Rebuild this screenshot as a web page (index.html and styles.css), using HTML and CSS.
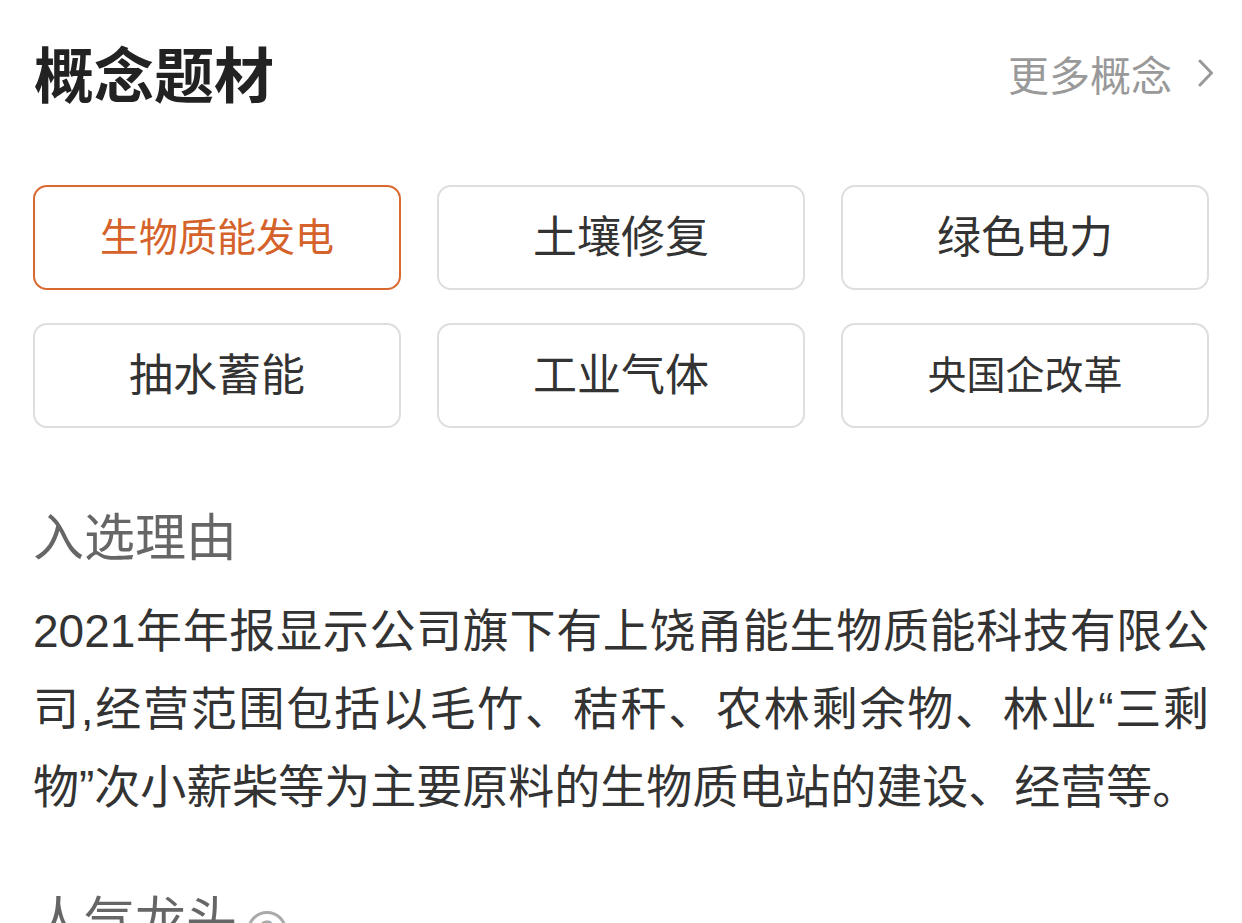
FILE: index.html
```html
<!DOCTYPE html>
<html lang="zh-CN">
<head>
<meta charset="utf-8">
<title>概念题材</title>
<link rel="stylesheet" href="styles.css">
</head>
<body>
<div class="page">
  <div class="header">
    <h1 class="title">概念题材</h1>
    <a class="more">更多概念<svg class="chev" width="16" height="28" viewBox="0 0 16 28"><polyline points="2,2 13.5,14 2,26" fill="none" stroke="#999" stroke-width="3" stroke-linecap="round" stroke-linejoin="round"/></svg></a>
  </div>

  <div class="tags">
    <div class="tag active small">生物质能发电</div>
    <div class="tag">土壤修复</div>
    <div class="tag">绿色电力</div>
    <div class="tag">抽水蓄能</div>
    <div class="tag">工业气体</div>
    <div class="tag small">央国企改革</div>
  </div>

  <h2 class="section">入选理由</h2>
  <p class="reason">2021年年报显示公司旗下有上饶甬能生物质能科技有限公司,经营范围包括以毛竹、秸秆、农林剩余物、林业“三剩物”次小薪柴等为主要原料的生物质电站的建设、经营等。</p>

  <h2 class="section section-2">人气龙头<span class="help">?</span></h2>
</div>
</body>
</html>
```
FILE: styles.css
```css
html, body {
  margin: 0;
  padding: 0;
  background: #ffffff;
}

body {
  font-family: "Liberation Sans", "Noto Sans CJK SC", sans-serif;
  color: #333333;
  overflow: hidden;
}

.page {
  padding: 0 33px;
}

.header {
  display: flex;
  justify-content: space-between;
  align-items: center;
  margin-top: 42px;
  height: 60px;
}

.title {
  margin: 0;
  font-family: "Noto Sans CJK SC", sans-serif;
  font-size: 60px;
  line-height: 60px;
  font-weight: 700;
  color: #222222;
  padding-left: 1px;
}

.more {
  display: flex;
  align-items: center;
  gap: 26px;
  font-family: "Noto Sans CJK SC", sans-serif;
  font-size: 41px;
  line-height: 48px;
  color: #999999;
  margin-right: -5px;
  margin-top: 2px;
}

.chev {
  display: block;
}

.tags {
  display: grid;
  grid-template-columns: repeat(3, 1fr);
  column-gap: 36px;
  row-gap: 33px;
  margin-top: 83px;
}

.tag {
  height: 105px;
  box-sizing: border-box;
  border: 2px solid #dedede;
  border-radius: 14px;
  display: flex;
  align-items: center;
  justify-content: center;
  padding-bottom: 7px;
  font-family: "Noto Sans CJK SC", sans-serif;
  font-size: 44px;
  color: #333333;
}

.tag.small {
  font-size: 39px;
}

.tag.active {
  border-color: #d9692f;
  color: #d5622a;
}

.section {
  margin: 78px 0 0;
  font-family: "Noto Sans CJK SC", sans-serif;
  font-weight: 400;
  font-size: 51px;
  line-height: 56px;
  color: #666666;
  display: flex;
  align-items: center;
}

.reason {
  margin: 30px 0 0;
  font-size: 46px;
  line-height: 78px;
  text-align: justify;
  color: #333333;
}

.section-2 {
  margin-top: 57px;
}

.help {
  display: inline-flex;
  align-items: center;
  justify-content: center;
  width: 40px;
  height: 40px;
  box-sizing: border-box;
  border: 3px solid #aaaaaa;
  border-radius: 50%;
  font-size: 30px;
  font-weight: 700;
  color: #aaaaaa;
  margin-left: 10px;
  margin-top: 28px;
}
```
